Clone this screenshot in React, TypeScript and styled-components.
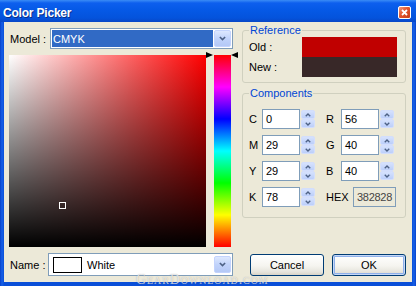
import styled, { createGlobalStyle } from "styled-components";

const GlobalStyle = createGlobalStyle`
  html, body {
    margin: 0;
    padding: 0;
    background: #ffffff;
  }
  body {
    font-family: "Liberation Sans", Arial, sans-serif;
    font-size: 11px;
    color: #000;
  }
`;

const Window = styled.div`
  position: relative;
  width: 416px;
  height: 286px;
  display: flex;
  flex-direction: column;
  background: linear-gradient(to right, #0841c9 0px, #1660e8 2px, #0a4fd8 4px, #0a4fd8 412px, #1660e8 414px, #0841c9 416px);
  overflow: hidden;
`;

const TitleBar = styled.div`
  flex: none;
  height: 22px;
  box-sizing: border-box;
  padding: 3px 5px 0 3px;
  display: flex;
  align-items: center;
  justify-content: space-between;
  background: linear-gradient(to bottom, #3a8cf6 0px, #0d5fee 3px, #0559e6 10px, #0453dc 18px, #0847c7 22px);
  color: #ffffff;
  font-weight: bold;
  font-size: 12px;
  letter-spacing: -0.2px;
  text-shadow: 1px 1px 0 #0a2f8a;
`;

const CloseButton = styled.div`
  width: 13px;
  height: 13px;
  box-sizing: border-box;
  border: 1px solid #ffffff;
  border-radius: 2px;
  background: linear-gradient(135deg, #f29a7c 0%, #e2552c 45%, #c63d17 100%);
  display: flex;
  align-items: center;
  justify-content: center;
`;

const Body = styled.div`
  flex: 1;
  margin: 0 4px 4px 4px;
  padding: 2px 6px 6px 5px;
  background: #ece9d8;
  display: flex;
  gap: 4px;
  min-height: 0;
`;

const LeftColumn = styled.div`
  width: 230px;
  padding-top: 4px;
  display: flex;
  flex-direction: column;
  gap: 6px;
`;

const RightColumn = styled.div`
  flex: 1;
  display: flex;
  flex-direction: column;
  gap: 4px;
`;

const FieldRow = styled.div`
  display: flex;
  align-items: center;
`;

const RowLabel = styled.div<{ $w: number }>`
  width: ${({ $w }) => $w}px;
  padding-left: 1px;
  box-sizing: border-box;
  white-space: nowrap;
`;

const Combo = styled.div<{ $w: number; $h: number }>`
  width: ${({ $w }) => $w}px;
  height: ${({ $h }) => $h}px;
  box-sizing: border-box;
  border: 1px solid #7f9db9;
  background: #ffffff;
  padding: 1px;
  display: flex;
  align-items: center;
  gap: 1px;
`;

const Selection = styled.div`
  flex: 1;
  align-self: stretch;
  background: #316ac5;
  color: #ffffff;
  padding-left: 1px;
  display: flex;
  align-items: center;
`;

const DropButton = styled.div`
  width: 17px;
  height: 17px;
  box-sizing: border-box;
  margin-left: auto;
  border: 1px solid #c3d3fd;
  border-radius: 2px;
  background: linear-gradient(to bottom, #dde8fe 0%, #c1d3fb 50%, #b4c8f6 100%);
  display: flex;
  align-items: center;
  justify-content: center;
`;

const Swatch = styled.div`
  width: 29px;
  height: 16px;
  box-sizing: border-box;
  border: 1px solid #000;
  background: #ffffff;
  margin: 0 4px 0 3px;
`;

const PickerRow = styled.div`
  display: flex;
  height: 192px;
`;

const ColorField = styled.div`
  position: relative;
  width: 197px;
  height: 192px;
  background: linear-gradient(to top, #000000 0%, rgba(0, 0, 0, 0) 100%),
    linear-gradient(to right, #ffffff 0%, #ff0000 100%);
`;

const Marker = styled.div`
  position: absolute;
  width: 7px;
  height: 7px;
  box-sizing: border-box;
  border: 1px solid #ffffff;
`;

const HueColumn = styled.div`
  position: relative;
  width: 32px;
  padding: 0 7px 0 8px;
  box-sizing: border-box;
`;

const HueBar = styled.div`
  height: 100%;
  background: linear-gradient(
    to bottom,
    #ff0000 0%,
    #ff00ff 16.67%,
    #0000ff 33.33%,
    #00ffff 50%,
    #00ff00 66.67%,
    #ffff00 83.33%,
    #ff0000 100%
  );
`;

const HueArrow = styled.div<{ $side: "left" | "right" }>`
  position: absolute;
  top: -3px;
  ${({ $side }) => ($side === "left" ? "left: 0;" : "right: 0;")}
  width: 0;
  height: 0;
  border-top: 3.5px solid transparent;
  border-bottom: 3.5px solid transparent;
  ${({ $side }) =>
    $side === "left" ? "border-left: 7px solid #000;" : "border-right: 7px solid #000;"}
`;

const Group = styled.fieldset`
  margin: 0;
  padding: 0 6px 5px 6px;
  border: 1px solid #d0d0bf;
  border-radius: 3px;
  min-width: 0;
`;

const GroupTitle = styled.legend`
  padding: 0 1px;
  line-height: 13px;
  color: #0046d5;
`;

const RefRow = styled.div`
  display: flex;
  align-items: center;
  height: 20px;
`;

const RefSwatch = styled.div<{ $color: string }>`
  width: 95px;
  height: 20px;
  background: ${({ $color }) => $color};
`;

const ComponentGrid = styled.div`
  padding-top: 9px;
  padding-bottom: 5px;
  display: flex;
  flex-direction: column;
  gap: 6px;
`;

const CompRow = styled.div`
  display: flex;
  align-items: center;
  height: 20px;
`;

const CompLabel = styled.div<{ $w: number }>`
  width: ${({ $w }) => $w}px;
  flex: none;
`;

const NumberBox = styled.div<{ $w?: number; $readonly?: boolean }>`
  flex: none;
  width: ${({ $w }) => $w ?? 38}px;
  height: 20px;
  box-sizing: border-box;
  border: 1px solid #7f9db9;
  background: ${({ $readonly }) => ($readonly ? "#ece9d8" : "#ffffff")};
  color: ${({ $readonly }) => ($readonly ? "#444444" : "#000000")};
  padding-left: ${({ $readonly }) => ($readonly ? 0 : 3)}px;
  letter-spacing: ${({ $readonly }) => ($readonly ? "-0.3px" : "0")};
  overflow: hidden;
  white-space: nowrap;
  display: flex;
  align-items: center;
  justify-content: ${({ $readonly }) => ($readonly ? "center" : "flex-start")};
`;

const Spinner = styled.div`
  flex: none;
  width: 14px;
  height: 18px;
  margin-left: 1px;
  display: flex;
  flex-direction: column;
`;

const SpinHalf = styled.div`
  flex: 1;
  box-sizing: border-box;
  border: 1px solid #d3defc;
  border-radius: 2px;
  background: linear-gradient(to bottom, #d6e2fd 0%, #bccffa 100%);
  display: flex;
  align-items: center;
  justify-content: center;
`;

const Gap = styled.div<{ $w: number }>`
  width: ${({ $w }) => $w}px;
  flex: none;
`;

const ButtonRow = styled.div`
  margin-top: auto;
  padding-left: 8px;
  display: flex;
  gap: 8px;
`;

const Button = styled.div<{ $default?: boolean }>`
  width: 74px;
  height: 22px;
  box-sizing: border-box;
  border: 1px solid #003c74;
  border-radius: 3px;
  background: linear-gradient(to bottom, #ffffff 0%, #f5f4ef 55%, #e6e4dc 85%, #d8d3c6 100%);
  display: flex;
  align-items: center;
  justify-content: center;
  ${({ $default }) =>
    $default ? "box-shadow: inset 0 0 0 1px #c6d8f7, inset 0 0 0 2px #8fb0ea;" : ""}
`;

const Watermark = styled.div`
  position: absolute;
  left: 136px;
  top: 272px;
  font-family: "Liberation Serif", "Times New Roman", serif;
  font-size: 14px;
  font-variant: small-caps;
  letter-spacing: 0.9px;
  color: rgba(255, 255, 255, 0.7);
  text-shadow: 0 0 1px rgba(90, 90, 90, 0.5);
  pointer-events: none;
`;

const Chevron = ({ up, size = 7 }: { up?: boolean; size?: number }) => (
  <svg width={size} height={Math.ceil(size / 2) + 1} viewBox="0 0 8 5">
    <path
      d={up ? "M1 4.2 L4 1.2 L7 4.2" : "M1 0.8 L4 3.8 L7 0.8"}
      fill="none"
      stroke="#4d6185"
      strokeWidth="1.8"
    />
  </svg>
);

const Spin = () => (
  <Spinner>
    <SpinHalf>
      <Chevron up size={6} />
    </SpinHalf>
    <SpinHalf>
      <Chevron size={6} />
    </SpinHalf>
  </Spinner>
);

const components = [
  { l: "C", v: "0", r: "R", rv: "56" },
  { l: "M", v: "29", r: "G", rv: "40" },
  { l: "Y", v: "29", r: "B", rv: "40" },
];

export default function App() {
  return (
    <>
      <GlobalStyle />
      <Window>
        <TitleBar>
          <span>Color Picker</span>
          <CloseButton>
            <svg width="7" height="7" viewBox="0 0 7 7">
              <path d="M1 1 L6 6 M6 1 L1 6" stroke="#fff" strokeWidth="1.8" />
            </svg>
          </CloseButton>
        </TitleBar>
        <Body>
          <LeftColumn>
            <FieldRow>
              <RowLabel $w={41}>Model :</RowLabel>
              <Combo $w={183} $h={21}>
                <Selection>CMYK</Selection>
                <DropButton>
                  <Chevron />
                </DropButton>
              </Combo>
            </FieldRow>
            <PickerRow>
              <ColorField>
                <Marker style={{ left: 50, top: 147 }} />
              </ColorField>
              <HueColumn>
                <HueBar />
                <HueArrow $side="left" />
                <HueArrow $side="right" />
              </HueColumn>
            </PickerRow>
            <FieldRow>
              <RowLabel $w={39}>Name :</RowLabel>
              <Combo $w={185} $h={23}>
                <Swatch />
                <span>White</span>
                <DropButton>
                  <Chevron />
                </DropButton>
              </Combo>
            </FieldRow>
          </LeftColumn>
          <RightColumn>
            <Group>
              <GroupTitle>Reference</GroupTitle>
              <RefRow>
                <CompLabel $w={53}>Old :</CompLabel>
                <RefSwatch $color="#c00000" />
              </RefRow>
              <RefRow>
                <CompLabel $w={53}>New :</CompLabel>
                <RefSwatch $color="#382828" />
              </RefRow>
            </Group>
            <Group>
              <GroupTitle>Components</GroupTitle>
              <ComponentGrid>
                {components.map((c) => (
                  <CompRow key={c.l}>
                    <CompLabel $w={13}>{c.l}</CompLabel>
                    <NumberBox>{c.v}</NumberBox>
                    <Spin />
                    <Gap $w={11} />
                    <CompLabel $w={15}>{c.r}</CompLabel>
                    <NumberBox>{c.rv}</NumberBox>
                    <Spin />
                  </CompRow>
                ))}
                <CompRow>
                  <CompLabel $w={13}>K</CompLabel>
                  <NumberBox>78</NumberBox>
                  <Spin />
                  <Gap $w={11} />
                  <CompLabel $w={27}>HEX</CompLabel>
                  <NumberBox $w={43} $readonly>
                    382828
                  </NumberBox>
                </CompRow>
              </ComponentGrid>
            </Group>
            <ButtonRow>
              <Button>Cancel</Button>
              <Button $default>OK</Button>
            </ButtonRow>
          </RightColumn>
        </Body>
        <Watermark>GearDownload.com</Watermark>
      </Window>
    </>
  );
}
